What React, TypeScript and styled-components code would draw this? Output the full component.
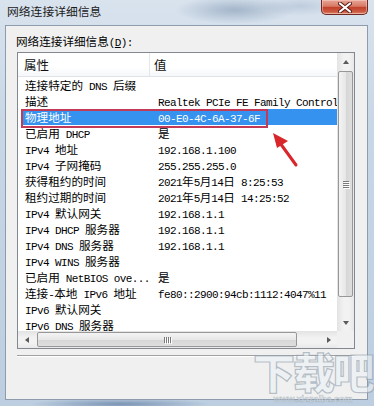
import React from 'react';
import styled, { createGlobalStyle } from 'styled-components';

const CJK = `"Noto Sans CJK SC", "Noto Sans", sans-serif`;
const MONO = `"Liberation Mono", "DejaVu Sans Mono", monospace`;

const GlobalStyle = createGlobalStyle`
  html, body { margin: 0; padding: 0; }
  body { width: 374px; height: 406px; overflow: hidden; font-family: ${CJK}; background: #c6d5e4; }
`;

const Window = styled.div`
  position: relative;
  width: 374px;
  height: 406px;
  box-sizing: border-box;
  display: flex;
  flex-direction: column;
  padding: 0 6px 6px 5px;
  overflow: hidden;
  background:
    radial-gradient(ellipse 60px 14px at 235px 10px, rgba(120, 145, 172, 0.55), transparent),
    radial-gradient(ellipse 40px 10px at 300px 6px, rgba(150, 170, 195, 0.4), transparent),
    radial-gradient(ellipse 90px 6px at 120px 404px, rgba(80, 110, 150, 0.6), transparent),
    linear-gradient(to bottom, #d9e3ee 0%, #c8d7e6 30%, #bccee0 100%);
`;

const TitleBar = styled.div`
  height: 25px;
  display: flex;
  align-items: flex-start;
`;

const Title = styled.div`
  padding: 4px 0 0 2px;
  font-size: 11.8px;
  line-height: 14px;
  color: #1a1a1a;
`;

const CloseButton = styled.div`
  margin-left: auto;
  width: 47px;
  height: 15px;
  box-sizing: border-box;
  border: 1px solid #6e2a22;
  border-top: none;
  border-radius: 0 0 5px 5px;
  background: linear-gradient(to bottom, #e6a595 0%, #d77a66 45%, #c2412b 52%, #cc5a42 85%, #e09a80 100%);
  box-shadow: inset 0 0 0 1px rgba(255, 220, 210, 0.45);
  display: flex;
  align-items: center;
  justify-content: center;
`;

const Client = styled.div`
  flex: 1;
  position: relative;
  display: flex;
  flex-direction: column;
  background: #f0f0f0;
  border: 1px solid #8d9cad;
  padding: 8px 12px 0 11px;
`;

const Label = styled.div`
  margin-left: -1px;
  font-size: 11.6px;
  line-height: 14px;
  height: 14px;
  color: #000;
  white-space: nowrap;
`;

const Latin = styled.span`
  font-family: ${MONO};
  font-size: 11px;
  letter-spacing: -0.6px;
`;

const Underlined = styled.span`
  text-decoration: underline;
`;

const List = styled.div`
  margin-top: 4px;
  height: 297px;
  box-sizing: border-box;
  border: 1px solid #828790;
  background: #fff;
  display: grid;
  grid-template-columns: 1fr 17px;
  grid-template-rows: 1fr 17px;
`;

const Content = styled.div`
  position: relative;
  overflow: hidden;
`;

const Header = styled.div`
  height: 24px;
  box-sizing: border-box;
  display: grid;
  grid-template-columns: 132px 1fr;
  border-bottom: 1px solid #dfe2e6;
  background: linear-gradient(to bottom, #ffffff 0%, #ffffff 60%, #f5f7f9 100%);
`;

const HeaderCell = styled.div<{ $pad: number; $divider?: boolean }>`
  padding-left: ${(p) => p.$pad}px;
  font-size: 12.5px;
  line-height: 23px;
  color: #111;
  border-right: ${(p) => (p.$divider ? '1px solid #e3e6ea' : 'none')};
`;

const Row = styled.div<{ $selected?: boolean }>`
  margin-left: 4px;
  height: 16px;
  display: grid;
  grid-template-columns: 128px 1fr;
  font-size: 11.6px;
  line-height: 16px;
  white-space: nowrap;
  color: ${(p) => (p.$selected ? '#fff' : '#000')};
  background: ${(p) => (p.$selected ? '#3592ee' : 'transparent')};
`;

const Cell = styled.div<{ $pad: number }>`
  padding-left: ${(p) => p.$pad}px;
  overflow: hidden;
`;

const Highlight = styled.div`
  position: absolute;
  left: 3px;
  top: 56px;
  width: 247px;
  height: 19px;
  box-sizing: border-box;
  border: 2px solid #c23a55;
  pointer-events: none;
`;

const VScroll = styled.div`
  display: flex;
  flex-direction: column;
  background: linear-gradient(to right, #e3e3e3, #f2f2f2 40%, #f2f2f2 70%, #e8e8e8);
`;

const HScroll = styled.div`
  display: flex;
  align-items: stretch;
  background: linear-gradient(to bottom, #e3e3e3, #f2f2f2 40%, #f2f2f2 70%, #e8e8e8);
`;

const Corner = styled.div`
  background: #f0f0f0;
`;

const ArrowBtn = styled.div<{ $size: number }>`
  flex: 0 0 ${(p) => p.$size}px;
  display: flex;
  align-items: center;
  justify-content: center;
`;

const Tri = styled.div<{ $dir: 'up' | 'down' | 'left' | 'right' }>`
  width: 0;
  height: 0;
  ${(p) =>
    p.$dir === 'up'
      ? 'border-left: 3.5px solid transparent; border-right: 3.5px solid transparent; border-bottom: 4px solid #5a5a5a;'
      : p.$dir === 'down'
      ? 'border-left: 3.5px solid transparent; border-right: 3.5px solid transparent; border-top: 4px solid #5a5a5a;'
      : p.$dir === 'left'
      ? 'border-top: 3.5px solid transparent; border-bottom: 3.5px solid transparent; border-right: 4px solid #5a5a5a;'
      : 'border-top: 3.5px solid transparent; border-bottom: 3.5px solid transparent; border-left: 4px solid #5a5a5a;'}
`;

const VThumb = styled.div`
  margin: 1px 1px 0 1px;
  height: 226px;
  box-sizing: border-box;
  border: 1px solid #979797;
  border-radius: 2px;
  background: linear-gradient(to right, #f4f4f4 0%, #e7e7e7 50%, #d6d6d6 51%, #dedede 100%);
  display: flex;
  align-items: center;
  justify-content: center;
`;

const HThumb = styled.div`
  margin: 1px 0 1px 2px;
  width: 260px;
  box-sizing: border-box;
  border: 1px solid #979797;
  border-radius: 2px;
  background: linear-gradient(to bottom, #f4f4f4 0%, #e7e7e7 50%, #d6d6d6 51%, #dedede 100%);
  display: flex;
  align-items: center;
  justify-content: center;
`;

const Spacer = styled.div`
  flex: 1;
`;

const Grip = styled.div<{ $vertical?: boolean }>`
  display: flex;
  flex-direction: ${(p) => (p.$vertical ? 'column' : 'row')};
  gap: 1px;
  & > i {
    display: block;
    background: #7a7a7a;
    box-shadow: 1px 1px 0 #fff;
    width: ${(p) => (p.$vertical ? '6px' : '1px')};
    height: ${(p) => (p.$vertical ? '1px' : '6px')};
  }
`;

const Separator = styled.div`
  margin-top: 6px;
  height: 1px;
  background: #a0a0a0;
  box-shadow: 0 1px 0 #fff;
`;

const Watermark = styled.div`
  position: absolute;
  right: -6px;
  bottom: -5px;
  display: flex;
  flex-direction: column;
  align-items: center;
  gap: 1px;
  pointer-events: none;
`;

const WatermarkBig = styled.div`
  font-family: ${CJK};
  font-weight: 900;
  font-size: 42px;
  line-height: 46px;
  height: 46px;
  letter-spacing: -2px;
  color: rgba(238, 242, 246, 0.6);
  -webkit-text-stroke: 1.2px rgba(130, 145, 160, 0.55);
`;

const WatermarkSmall = styled.div`
  font-family: "Liberation Sans", sans-serif;
  font-weight: 700;
  font-size: 9px;
  line-height: 9px;
  color: rgba(238, 242, 246, 0.6);
  -webkit-text-stroke: 0.5px rgba(130, 145, 160, 0.55);
`;

const ArrowMark = styled.svg`
  position: absolute;
  left: 266px;
  top: 127px;
  pointer-events: none;
`;

const Mixed: React.FC<{ text: string }> = ({ text }) => {
  const parts = text.split(/([\x00-\x7F]+)/).filter((s) => s.length > 0);
  return (
    <>
      {parts.map((p, i) =>
        /^[\x00-\x7F]+$/.test(p) ? <Latin key={i}>{p}</Latin> : <React.Fragment key={i}>{p}</React.Fragment>
      )}
    </>
  );
};

const rows: [string, string][] = [
  ['连接特定的 DNS 后缀', ''],
  ['描述', 'Realtek PCIe FE Family Controller'],
  ['物理地址', '00-E0-4C-6A-37-6F'],
  ['已启用 DHCP', '是'],
  ['IPv4 地址', '192.168.1.100'],
  ['IPv4 子网掩码', '255.255.255.0'],
  ['获得租约的时间', '2021年5月14日 8:25:53'],
  ['租约过期的时间', '2021年5月14日 14:25:52'],
  ['IPv4 默认网关', '192.168.1.1'],
  ['IPv4 DHCP 服务器', '192.168.1.1'],
  ['IPv4 DNS 服务器', '192.168.1.1'],
  ['IPv4 WINS 服务器', ''],
  ['已启用 NetBIOS ove...', '是'],
  ['连接-本地 IPv6 地址', 'fe80::2900:94cb:1112:4047%11'],
  ['IPv6 默认网关', ''],
  ['IPv6 DNS 服务器', ''],
];

export default function App() {
  return (
    <>
      <GlobalStyle />
      <Window>
        <TitleBar>
          <Title>网络连接详细信息</Title>
          <CloseButton>
            <svg width="14" height="11" viewBox="0 0 14 11">
              <path d="M2 1.5 L12 9.5 M12 1.5 L2 9.5" stroke="#5a1a14" strokeWidth="4" strokeLinecap="round" />
              <path d="M2 1.5 L12 9.5 M12 1.5 L2 9.5" stroke="#ffffff" strokeWidth="2.2" strokeLinecap="round" />
            </svg>
          </CloseButton>
        </TitleBar>
        <Client>
          <Label>
            网络连接详细信息<Latin>(<Underlined>D</Underlined>):</Latin>
          </Label>
          <List>
            <Content>
              <Header>
                <HeaderCell $pad={6} $divider>属性</HeaderCell>
                <HeaderCell $pad={4}>值</HeaderCell>
              </Header>
              {rows.map(([k, v], i) => (
                <Row key={i} $selected={i === 2}>
                  <Cell $pad={3}>
                    <Mixed text={k} />
                  </Cell>
                  <Cell $pad={8}>
                    <Mixed text={v} />
                  </Cell>
                </Row>
              ))}
              <Highlight />
            </Content>
            <VScroll>
              <ArrowBtn $size={17}>
                <Tri $dir="up" />
              </ArrowBtn>
              <VThumb>
                <Grip $vertical>
                  <i />
                  <i />
                  <i />
                  <i />
                </Grip>
              </VThumb>
              <Spacer />
              <ArrowBtn $size={17}>
                <Tri $dir="down" />
              </ArrowBtn>
            </VScroll>
            <HScroll>
              <ArrowBtn $size={17}>
                <Tri $dir="left" />
              </ArrowBtn>
              <HThumb>
                <Grip>
                  <i />
                  <i />
                  <i />
                  <i />
                </Grip>
              </HThumb>
              <Spacer />
              <ArrowBtn $size={17}>
                <Tri $dir="right" />
              </ArrowBtn>
            </HScroll>
            <Corner />
          </List>
          <Separator />
          <Watermark>
            <WatermarkBig>下载吧</WatermarkBig>
            <WatermarkSmall>www.xiazaiba.com</WatermarkSmall>
          </Watermark>
        </Client>
        <ArrowMark width="40" height="42" viewBox="0 0 40 42">
          <path d="M30 38 L14 16" stroke="#d8262a" strokeWidth="3" strokeLinecap="round" />
          <path d="M7 6 L22 14 L11 21 Z" fill="#d8262a" />
        </ArrowMark>
      </Window>
    </>
  );
}
